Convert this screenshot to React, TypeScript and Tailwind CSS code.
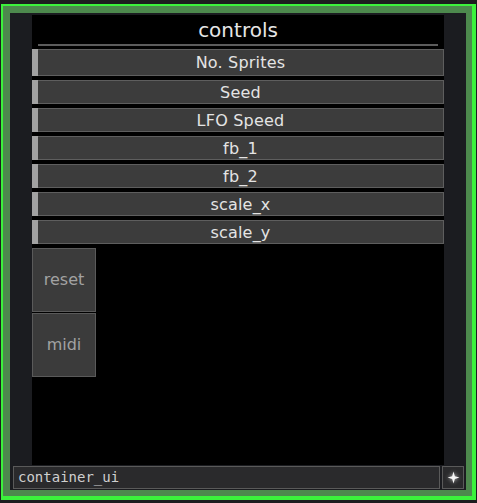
import React from "react";

const SLIDERS = ["Seed", "LFO Speed", "fb_1", "fb_2", "scale_x", "scale_y"];

function SliderRow({ label, first }: { label: string; first?: boolean }) {
  return (
    <div className={`flex w-full ${first ? "h-[27px]" : "h-[24px]"}`}>
      <div className="w-[6px] bg-[#a2a2a2]" />
      <div className="flex flex-1 items-center justify-center border border-l-0 border-[#5e5e5e] bg-[#3c3c3c] pt-[1px] text-[16px] tracking-[0.2px] text-[#e4e4e4]">
        {label}
      </div>
    </div>
  );
}

function SquareButton({ label }: { label: string }) {
  return (
    <div className="flex h-[64px] w-[64px] items-center justify-center border border-[#5a5a5a] bg-[#3b3b3b] text-[16px] text-[#a2a2a2]">
      {label}
    </div>
  );
}

function Sparkle() {
  return (
    <svg width="15" height="15" viewBox="0 0 24 24" className="drop-shadow-[0_0_2px_rgba(255,255,255,0.7)]">
      <path
        d="M12 2.5 L14.2 9.8 L21.5 12 L14.2 14.2 L12 21.5 L9.8 14.2 L2.5 12 L9.8 9.8 Z"
        fill="#f6f6f6"
      />
    </svg>
  );
}

export default function App() {
  return (
    <div
      className="h-[503px] w-[477px] bg-[#1d1d1f] pl-[1px] pt-[4px]"
      style={{ fontFamily: '"DejaVu Sans", Verdana, sans-serif' }}
    >
      <div className="h-[496px] w-[475px] border-b-[4px] border-l-[2px] border-r-[4px] border-t-[2px] border-[#3cf23c]">
        <div className="flex h-full w-full flex-col border-b-[6px] border-l-[7px] border-r-[6px] border-t-[7px] border-[#4d894d] bg-[#1b1c20]">
          <div className="mx-[22px] mt-[2px] flex h-[450px] flex-col bg-black">
            <div className="flex h-[29px] items-center justify-center text-[20px] leading-none text-[#e6e6e6]">
              controls
            </div>
            <div className="mx-[6px] h-[2px] bg-[#5c5c5c]" />
            <div className="mt-[3px] flex flex-col gap-[4px]">
              <SliderRow label="No. Sprites" first />
              {SLIDERS.map((s) => (
                <SliderRow key={s} label={s} />
              ))}
            </div>
            <div className="mt-[4px] flex flex-col gap-[1px]">
              <SquareButton label="reset" />
              <SquareButton label="midi" />
            </div>
          </div>
          <div className="mt-[1px] flex h-[23px] gap-[2px] pl-[3px] pr-[2px]">
            <div
              className="flex w-[427px] items-center border border-[#5a5a5a] bg-[#2a2a2c] pl-[4px] text-[14px] text-[#cfcfcf]"
              style={{ fontFamily: '"DejaVu Sans Mono", monospace' }}
            >
              container_ui
            </div>
            <div className="flex w-[22px] items-center justify-center border border-[#5a5a5a] bg-[#2a2a2c]">
              <Sparkle />
            </div>
          </div>
        </div>
      </div>
    </div>
  );
}
